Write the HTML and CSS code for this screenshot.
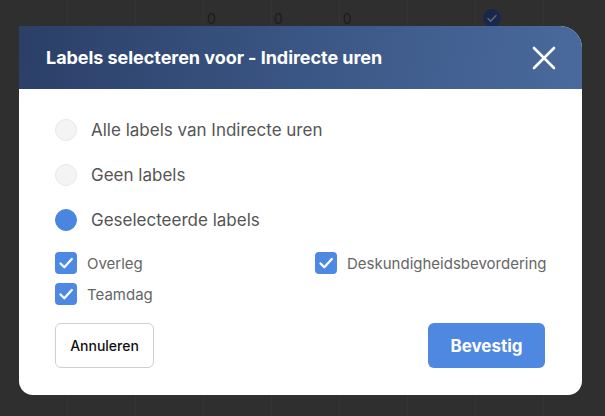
FILE: index.html
```html
<!DOCTYPE html>
<html>
<head>
<meta charset="utf-8">
<link rel="stylesheet" href="styles.css">
</head>
<body>
<div class="backdrop">
  <div class="bg-row">
    <span class="bg-num n1">0</span>
    <span class="bg-num n2">0</span>
    <span class="bg-num n3">0</span>
    <span class="bg-check">
      <svg width="18" height="18" viewBox="0 0 18 18"><path d="M5 9.5l2.6 2.6L13 6.5" fill="none" stroke="#5a6578" stroke-width="1.6" stroke-linecap="round" stroke-linejoin="round"/></svg>
    </span>
  </div>
</div>
<div class="modal">
  <div class="modal-header">
    <h1 class="title">Labels selecteren voor - Indirecte uren</h1>
    <svg class="close" width="24" height="24" viewBox="0 0 24 24"><path d="M2 2L22 22M22 2L2 22" stroke="#fff" stroke-width="2.6" stroke-linecap="round"/></svg>
  </div>
  <div class="modal-body">
    <div class="radios">
      <div class="radio-row"><span class="radio"></span><span class="radio-label">Alle labels van Indirecte uren</span></div>
      <div class="radio-row"><span class="radio"></span><span class="radio-label">Geen labels</span></div>
      <div class="radio-row"><span class="radio on"></span><span class="radio-label">Geselecteerde labels</span></div>
    </div>
    <div class="checks">
      <div class="check-row"><span class="box"><svg width="22" height="22" viewBox="0 0 22 22"><path d="M5.5 11.5l3.8 3.8L16.8 7" fill="none" stroke="#fff" stroke-width="2.3" stroke-linecap="round" stroke-linejoin="round"/></svg></span><span class="check-label">Overleg</span></div>
      <div class="check-row"><span class="box"><svg width="22" height="22" viewBox="0 0 22 22"><path d="M5.5 11.5l3.8 3.8L16.8 7" fill="none" stroke="#fff" stroke-width="2.3" stroke-linecap="round" stroke-linejoin="round"/></svg></span><span class="check-label">Deskundigheidsbevordering</span></div>
      <div class="check-row"><span class="box"><svg width="22" height="22" viewBox="0 0 22 22"><path d="M5.5 11.5l3.8 3.8L16.8 7" fill="none" stroke="#fff" stroke-width="2.3" stroke-linecap="round" stroke-linejoin="round"/></svg></span><span class="check-label">Teamdag</span></div>
    </div>
    <div class="actions">
      <button class="btn btn-cancel">Annuleren</button>
      <button class="btn btn-ok">Bevestig</button>
    </div>
  </div>
</div>
</body>
</html>
```
FILE: styles.css
```css
html, body {
  margin: 0;
  padding: 0;
  width: 605px;
  height: 416px;
  overflow: hidden;
}
body {
  background-color: #2f2f2f;
  background-image: repeating-linear-gradient(90deg, transparent 0, transparent 67px, #343434 67px, #343434 68px);
  font-family: "Inter", "Noto Sans", sans-serif;
  position: relative;
}
.backdrop {
  height: 416px;
}
.bg-row {
  display: flex;
  align-items: center;
  height: 36px;
}
.bg-num {
  color: #1c1c1c;
  font-size: 14px;
  font-family: "Inter", sans-serif;
}
.n1 { margin-left: 207px; }
.n2 { margin-left: 58px; }
.n3 { margin-left: 60px; }
.bg-check {
  margin-left: 131px;
  width: 18px;
  height: 18px;
  border-radius: 50%;
  background: #19284a;
  display: flex;
}
.modal {
  position: absolute;
  left: 19px;
  top: 26px;
  width: 563px;
  height: 369px;
  background: #fff;
  border-radius: 0 22px 14px 14px;
  overflow: hidden;
  display: flex;
  flex-direction: column;
}
.modal-header {
  height: 63px;
  flex: none;
  background: linear-gradient(100deg, #2b3f67 0%, #3a5684 50%, #4a6a9d 100%);
  display: flex;
  align-items: center;
  justify-content: space-between;
  padding: 0 26px 0 27px;
}
.title {
  margin: 0;
  color: #fff;
  font-size: 18px;
  font-weight: 700;
  letter-spacing: -0.05px;
}
.modal-body {
  flex: 1;
  padding: 30px 37px 27px 36px;
  display: flex;
  flex-direction: column;
}
.radios {
  display: flex;
  flex-direction: column;
  gap: 23px;
}
.radio-row {
  display: flex;
  align-items: center;
  height: 22px;
}
.radio {
  width: 20px;
  height: 20px;
  border-radius: 50%;
  background: #f4f4f4;
  border: 1px solid #e8e8e8;
  flex: none;
}
.radio.on {
  background: #4a86e1;
  border-color: #4a86e1;
}
.radio-label {
  margin-left: 14px;
  color: #555;
  font-size: 17px;
  font-weight: 400;
}
.checks {
  margin-top: 21px;
  display: grid;
  grid-template-columns: 260px 1fr;
  row-gap: 9px;
}
.check-row {
  display: flex;
  align-items: center;
  height: 22px;
}
.box {
  width: 22px;
  height: 22px;
  border-radius: 4px;
  background: #4d88e3;
  flex: none;
  display: flex;
}
.check-label {
  margin-left: 10px;
  color: #666;
  font-size: 15px;
}
.actions {
  margin-top: auto;
  display: flex;
  justify-content: space-between;
}
.btn {
  height: 45px;
  border-radius: 6px;
  font-family: "Inter", sans-serif;
  cursor: pointer;
}
.btn-cancel {
  width: 99px;
  background: #fff;
  border: 1px solid #cfcfcf;
  color: #111;
  font-size: 14px;
  font-weight: 500;
}
.btn-ok {
  width: 117px;
  background: #4f88e1;
  border: none;
  color: #fff;
  font-size: 17px;
  font-weight: 700;
}
```
